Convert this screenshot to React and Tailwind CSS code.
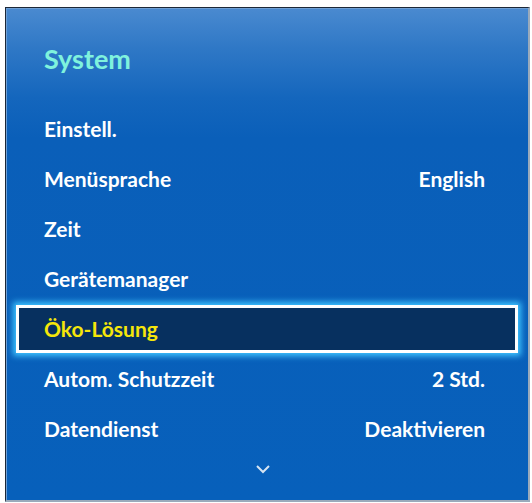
const rows = [
  { label: "Einstell." },
  { label: "Menüsprache", value: "English" },
  { label: "Zeit" },
  { label: "Gerätemanager" },
  { label: "Öko-Lösung", selected: true },
  { label: "Autom. Schutzzeit", value: "2 Std." },
  { label: "Datendienst", value: "Deaktivieren" },
];

function Row({ label, value, selected }) {
  if (selected) {
    return (
      <div className="h-[50px] flex items-center">
        <div className="h-[48px] w-full flex items-center justify-between pl-[25px] pr-[30px] bg-[#07305f] border-[3px] border-white shadow-[0_0_6px_3px_#3fc4ff]">
          <span className="text-[#f5e60a]">{label}</span>
          {value && <span className="text-[#f5e60a]">{value}</span>}
        </div>
      </div>
    );
  }
  return (
    <div className="h-[50px] flex items-center justify-between pl-[28px] pr-[33px] text-white">
      <span>{label}</span>
      {value && <span>{value}</span>}
    </div>
  );
}

export default function App() {
  return (
    <div className="w-[532px] h-[503px] bg-white pt-[7px] pl-[5px]" style={{ fontFamily: "Lato, 'Liberation Sans', sans-serif" }}>
      <div className="w-[525px] h-[495px] border-t border-l border-[#1c2838] border-r-2 border-b-2 border-r-[#9aaabb] border-b-[#9aaabb] bg-[linear-gradient(to_bottom,#4a8ad0_0px,#2f78c6_40px,#1466bd_90px,#0a5fb9_130px,#0760bb_100%)] shadow-[inset_1px_1px_0_#6f9fd4]">
        <div className="h-[96px] pl-[38px] pt-[36px]">
          <div className="text-[27px] font-bold leading-[30px] text-[#7ff2dd]">System</div>
        </div>
        <div className="px-[10px] text-[21px] font-bold">
          {rows.map((r) => (
            <Row key={r.label} {...r} />
          ))}
        </div>
        <div className="flex justify-center pt-[10px] pr-[8px]">
          <svg width="16" height="10" viewBox="0 0 16 10">
            <path d="M2 2 L8 8 L14 2" fill="none" stroke="#d6e4f2" strokeWidth="2" />
          </svg>
        </div>
      </div>
    </div>
  );
}
